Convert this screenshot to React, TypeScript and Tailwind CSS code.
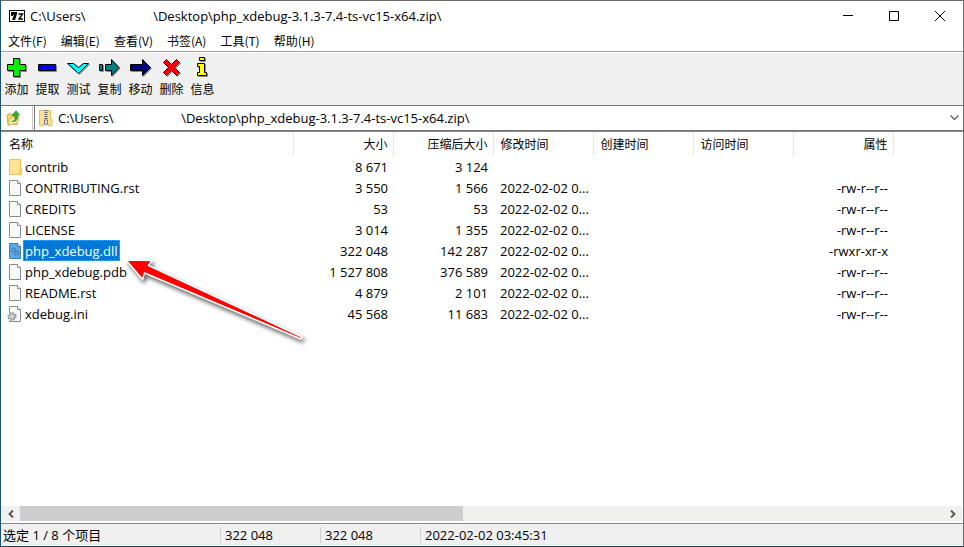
import type { ReactNode } from "react";

const PATH =
  "C:\\Users\\" + "\u00a0".repeat(20) + "\\Desktop\\php_xdebug-3.1.3-7.4-ts-vc15-x64.zip\\";

const LATIN = "font-['Open_Sans','Noto_Sans_CJK_SC',sans-serif]";
const CJK = "font-['Noto_Sans_CJK_SC',sans-serif]";

const menus = ["文件(F)", "编辑(E)", "查看(V)", "书签(A)", "工具(T)", "帮助(H)"];

function ToolIcon({ d, fill }: { d: string; fill: string }) {
  return (
    <svg viewBox="0 0 25 25" className="block size-[25px]" aria-hidden="true">
      <path d={d} transform="translate(1 1)" fill="#8a8a8a" stroke="#8a8a8a" />
      <path d={d} fill={fill} stroke="#000" />
    </svg>
  );
}

const tools = [
  { label: "添加", fill: "#00f000", d: "M9.5 3.5H15.5V9.5H21.5V15.5H15.5V21.5H9.5V15.5H3.5V9.5H9.5Z" },
  { label: "提取", fill: "#0000ff", d: "M3.5 9.5H20.5V15.5H3.5Z" },
  { label: "测试", fill: "#00ffff", d: "M1.5 8.5H7.5L12.5 12.5L17.5 8.5H22.5L12.5 18.5Z" },
  { label: "复制", fill: "#008080", d: "M2.5 9.5H5.5V15.5H2.5ZM8.5 9.5H14.5V4.5L22 12.5L14.5 20.5V15.5H8.5Z" },
  { label: "移动", fill: "#000080", d: "M2.5 9.5H14.5V4.5L22.5 12.5L14.5 20.5V15.5H2.5Z" },
  { label: "删除", fill: "#ff0000", d: "M4.5 7.5L7.5 4.5L12.5 9.5L17.5 4.5L20.5 7.5L15.5 12.5L20.5 17.5L17.5 20.5L12.5 15.5L7.5 20.5L4.5 17.5L9.5 12.5Z" },
  { label: "信息", fill: "#ffff00", d: "M9.5 2.5H14.5V5.5H9.5ZM7.5 8.5H14.5V17.5H16.5V20.5H7.5V17.5H9.5V11.5H7.5Z" },
];

function FolderIcon() {
  return (
    <svg viewBox="0 0 16 16" className="block size-4" aria-hidden="true">
      <path d="M1.5 .5H12.5V9H13.5V15.5H1.5Z" fill="#ffe391" stroke="#e8c35c" />
      <path d="M11.5 9.5H13.5V15.5H10.5Z" fill="#f7ce60" />
    </svg>
  );
}

function FileIcon({ children }: { children?: ReactNode }) {
  return (
    <svg viewBox="0 0 16 16" className="block size-4 overflow-visible" aria-hidden="true">
      <path d="M1.5 .5H9.5L12.5 3.5V15.5H1.5Z" fill="#f8f9fa" stroke="#868b90" />
      <path d="M9.5 .5V3.5H12.5" fill="#fff" stroke="#868b90" />
      {children}
    </svg>
  );
}

function DllIcon() {
  return (
    <svg viewBox="0 0 16 16" className="block size-4" aria-hidden="true">
      <path d="M1.5 .5H9.5L12.5 3.5V15.5H1.5Z" fill="#61a9e4" stroke="#3f80b9" />
      <path d="M9.5 .5V3.5H12.5" fill="#b8dcf7" stroke="#3f80b9" />
      <g fill="none" stroke="#306ea8">
        <circle cx="5.5" cy="7" r="2" strokeDasharray="1 .6" strokeWidth="1.2" />
        <circle cx="8.5" cy="10" r="2" strokeDasharray="1 .6" strokeWidth="1.2" />
      </g>
    </svg>
  );
}

function IniIcon() {
  return (
    <FileIcon>
      <circle cx="4" cy="10.5" r="4.8" fill="#f8f9fa" />
      <circle cx="4" cy="10.5" r="4" fill="none" stroke="#7f858b" strokeWidth="1.3" strokeDasharray="1.5 1.64" />
      <circle cx="4" cy="10.5" r="2.9" fill="#e4e6e8" stroke="#858b91" />
      <circle cx="4" cy="10.5" r="1.2" fill="#fff" stroke="#8d9298" strokeWidth=".6" />
    </FileIcon>
  );
}

const DATE = "2022-02-02 0...";
const RW = "-rw-r--r--";

const rows = [
  { icon: <FolderIcon />, name: "contrib", size: "8 671", packed: "3 124", date: "", attr: "" },
  { icon: <FileIcon />, name: "CONTRIBUTING.rst", size: "3 550", packed: "1 566", date: DATE, attr: RW },
  { icon: <FileIcon />, name: "CREDITS", size: "53", packed: "53", date: DATE, attr: RW },
  { icon: <FileIcon />, name: "LICENSE", size: "3 014", packed: "1 355", date: DATE, attr: RW },
  { icon: <DllIcon />, name: "php_xdebug.dll", size: "322 048", packed: "142 287", date: DATE, attr: "-rwxr-xr-x", selected: true },
  { icon: <FileIcon />, name: "php_xdebug.pdb", size: "1 527 808", packed: "376 589", date: DATE, attr: RW },
  { icon: <FileIcon />, name: "README.rst", size: "4 879", packed: "2 101", date: DATE, attr: RW },
  { icon: <IniIcon />, name: "xdebug.ini", size: "45 568", packed: "11 683", date: DATE, attr: RW },
];

const columns = [
  { label: "名称", right: false },
  { label: "大小", right: true },
  { label: "压缩后大小", right: true },
  { label: "修改时间", right: false },
  { label: "创建时间", right: false },
  { label: "访问时间", right: false },
  { label: "属性", right: true },
];

function TitleBar() {
  return (
    <header className="flex h-[30px] shrink-0 items-center bg-white pl-2">
      <svg viewBox="0 0 16 12" className="block h-3 w-4" aria-hidden="true">
        <rect x=".5" y=".5" width="15" height="11" fill="#fff" stroke="#000" />
        <path d="M2 2H8V4L6 10H3L5 5H4V6H2Z" fill="#000" />
        <path d="M9.5 4H13.5L10 9H14" fill="none" stroke="#000" strokeWidth="1.4" />
      </svg>
      <h1 className="ml-[5px] min-w-0 grow truncate">{PATH}</h1>
      <div className="flex h-full shrink-0">
        <button aria-label="Minimize" className="flex w-[46px] items-center justify-center">
          <svg viewBox="0 0 10 10" className="size-2.5"><path d="M0 4.5H10" stroke="#000" /></svg>
        </button>
        <button aria-label="Maximize" className="flex w-[46px] items-center justify-center">
          <svg viewBox="0 0 10 10" className="size-2.5"><path d="M.5 .5H9.5V9.5H.5Z" fill="none" stroke="#000" /></svg>
        </button>
        <button aria-label="Close" className="flex w-[46px] items-center justify-center">
          <svg viewBox="0 0 10 10" className="size-2.5"><path d="M0 0L10 10M10 0L0 10" stroke="#000" /></svg>
        </button>
      </div>
    </header>
  );
}

function AddressBar() {
  return (
    <div className="flex h-[26px] shrink-0 border-y border-[#767676] bg-white">
      <button aria-label="Up" className="flex w-[32px] items-center border-r border-[#c8c8c8] pl-[5px]">
        <svg viewBox="0 0 16 16" className="size-4" aria-hidden="true">
          <path d="M1 5L5 3.5L6.5 5H11.5V14L2 15Z" fill="#f4d466" stroke="#c99c2c" strokeWidth=".8" />
          <path d="M2 15L4.5 8L13.5 6.5L11 13.5Z" fill="#fff0a8" stroke="#d5ad45" strokeWidth=".8" />
          <path d="M6 11.5C9.5 11 9.5 8 8.8 5.5H6L10 .8L13.5 5H11.3C12 9 10.5 12 6 11.5Z" fill="#3aac34" stroke="#1d7d20" strokeWidth=".7" />
        </svg>
      </button>
      <div className="ml-px flex min-w-0 grow items-center border-l border-[#767676] pl-1">
        <svg viewBox="0 0 14 16" className="h-4 w-3.5 shrink-0" aria-hidden="true">
          <path d="M.5 .5H11.5V9H13V15.5H.5Z" fill="#ffe08a" stroke="#e6c05a" />
          <path d="M5 0H9V16H5Z" fill="#d9d9d9" />
          <path d="M7 0V9" stroke="#666" strokeWidth="3" strokeDasharray="1 1" />
          <path d="M5.5 10H8.5V14H5.5Z" fill="#f2f2f2" stroke="#777" />
        </svg>
        <input aria-label="Path" defaultValue={PATH} className="ml-[5px] min-w-0 grow bg-transparent outline-none" />
        <button aria-label="Show history" className="flex h-full w-[18px] shrink-0 items-center justify-center">
          <svg viewBox="0 0 9 6" className="h-1.5 w-[9px]"><path d="M.5 .5L4.5 4.5L8.5 .5" fill="none" stroke="#555" strokeWidth="1.2" /></svg>
        </button>
      </div>
    </div>
  );
}

function FileTable() {
  return (
    <table className="w-[892px] table-fixed border-collapse whitespace-nowrap">
      <colgroup>
        <col className="w-[292px]" />
        {columns.slice(1).map((c) => <col key={c.label} className="w-[100px]" />)}
      </colgroup>
      <thead>
        <tr className={`h-6 text-xs ${CJK}`}>
          {columns.map((c, i) => (
            <th
              key={c.label}
              className={`border-r border-[#e5e5e5] p-0 font-normal ${c.right ? "pr-[5px] text-right" : i === 0 ? "pl-2 text-left" : "pl-[7px] text-left"}`}
            >
              {c.label}
            </th>
          ))}
        </tr>
      </thead>
      <tbody>
        {rows.map((r) => (
          <tr key={r.name} className="h-[21px]" aria-selected={r.selected}>
            <td className="p-0">
              <div className="flex h-[21px] items-center pl-[7px]">
                {r.icon}
                {r.selected ? (
                  <span className="-ml-px flex h-[21px] items-center border border-dotted border-[#ff8728] bg-[#0078d7] px-px text-white">{r.name}</span>
                ) : (
                  <span className="pl-px">{r.name}</span>
                )}
              </div>
            </td>
            <td className="p-0 pr-[5px] text-right">{r.size}</td>
            <td className="p-0 pr-[5px] text-right">{r.packed}</td>
            <td className="p-0 pl-[7px]">{r.date}</td>
            <td className="p-0" />
            <td className="p-0" />
            <td className="p-0 pr-[5px] text-right">{r.attr}</td>
          </tr>
        ))}
      </tbody>
    </table>
  );
}

function Arrow() {
  return (
    <svg viewBox="0 0 200 100" className="pointer-events-none absolute top-[118px] left-[119px] h-[100px] w-[200px] drop-shadow-[2px_3px_2px_rgba(0,0,0,0.6)]" aria-hidden="true">
      <path d="M6 10L32 10.5L28.5 15.5L182 87L181 89L24.5 23L22.5 29.5Z" fill="#ff0000" stroke="#fff" strokeWidth="1.6" strokeLinejoin="round" />
    </svg>
  );
}

function ScrollBar() {
  return (
    <div className="mr-px mb-0.5 flex h-[15px] shrink-0 bg-[#f0f0f0]">
      <button aria-label="Scroll left" className="flex w-[19px] items-center justify-center">
        <svg viewBox="0 0 6 8" className="h-2 w-1.5"><path d="M5 .5L1.5 4L5 7.5" fill="none" stroke="#505050" strokeWidth="1.8" /></svg>
      </button>
      <div className="grow">
        <div className="h-full w-[48%] bg-[#cdcdcd]" />
      </div>
      <button aria-label="Scroll right" className="flex w-[19px] items-center justify-center">
        <svg viewBox="0 0 6 8" className="h-2 w-1.5"><path d="M1 .5L4.5 4L1 7.5" fill="none" stroke="#505050" strokeWidth="1.8" /></svg>
      </button>
    </div>
  );
}

export default function App() {
  return (
    <div className={`flex h-screen flex-col overflow-hidden border border-t-[#6b6b6b] border-r-[#6b6b6b] border-b-[#1d4468] border-l-[#1b5276] bg-[#f0f0f0] text-[13px] leading-4 text-black ${LATIN}`}>
      <TitleBar />
      <nav className={`flex h-[21px] shrink-0 items-center border-b border-[#a0a0a0] bg-white text-xs ${CJK}`}>
        {menus.map((m) => (
          <button key={m} className="px-[7px]">{m}</button>
        ))}
      </nav>
      <div className={`flex h-[53px] shrink-0 border-t border-white pt-0.5 text-xs ${CJK}`}>
        {tools.map((t) => (
          <button key={t.label} className="flex w-[31px] flex-col items-center leading-[18px]">
            <ToolIcon d={t.d} fill={t.fill} />
            {t.label}
          </button>
        ))}
      </div>
      <AddressBar />
      <main className="relative flex min-h-0 grow flex-col border-t border-[#828790] bg-white">
        <div className="min-h-0 grow overflow-hidden">
          <FileTable />
        </div>
        <Arrow />
        <ScrollBar />
      </main>
      <footer className="flex h-[23px] shrink-0 items-center border-t border-[#828790]">
        <span className="w-[219px] pl-0.5">选定 1 / 8 个项目</span>
        <span className="w-[100px] border-l border-[#d0d0d0] pl-1">322 048</span>
        <span className="w-[100px] border-l border-[#d0d0d0] pl-1">322 048</span>
        <span className="grow border-l border-[#d0d0d0] pl-1">2022-02-02 03:45:31</span>
      </footer>
    </div>
  );
}
